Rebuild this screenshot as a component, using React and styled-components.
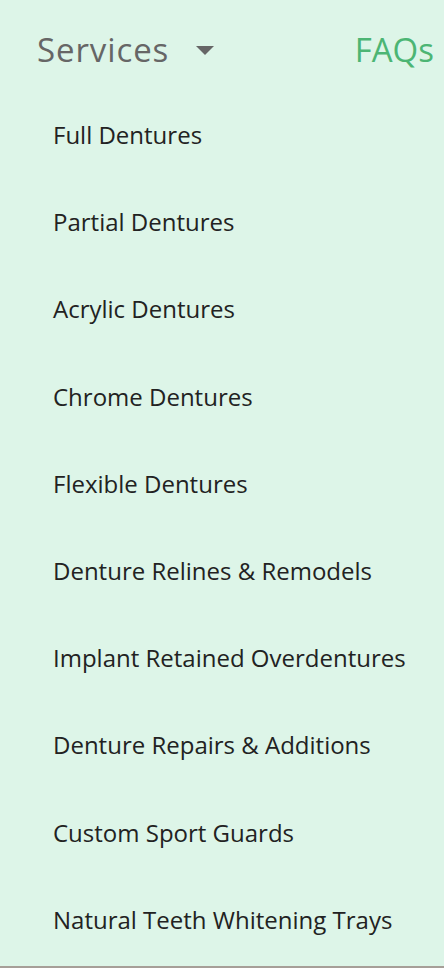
import React from "react";
import styled, { createGlobalStyle } from "styled-components";

const GlobalStyle = createGlobalStyle`
  html, body {
    margin: 0;
    padding: 0;
    background: #ddf5e8;
  }
  * { box-sizing: border-box; }
`;

const Menu = styled.nav`
  width: 444px;
  height: 968px;
  background: #ddf5e8;
  font-family: "Open Sans", "Liberation Sans", sans-serif;
  display: flex;
  flex-direction: column;
  border-bottom: 2px solid #a69f98;
  overflow: hidden;
`;

const TopBar = styled.div`
  display: flex;
  align-items: center;
  justify-content: space-between;
  height: 98px;
  padding: 0 10px 0 37px;
`;

const Toggle = styled.button`
  display: flex;
  align-items: center;
  gap: 27px;
  border: none;
  background: none;
  padding: 0;
  font: inherit;
  font-size: 33px;
  letter-spacing: 0.9px;
  color: #666666;
  cursor: pointer;
`;

const Caret = styled.span`
  width: 0;
  height: 0;
  border-left: 9.5px solid transparent;
  border-right: 9.5px solid transparent;
  border-top: 9px solid #666666;
  margin-top: 2px;
`;

const TopLink = styled.a`
  font-size: 33px;
  color: #4cb574;
  text-decoration: none;
`;

const List = styled.ul`
  list-style: none;
  margin: 0;
  padding: 0;
  display: flex;
  flex-direction: column;
`;

const Item = styled.li`
  height: 87.2px;
  display: flex;
  align-items: center;
  padding-left: 53px;
  font-size: 24px;
  color: #222222;
  margin-top: ${p => (p.$first ? "-7px" : "0")};
`;

const services = [
  "Full Dentures",
  "Partial Dentures",
  "Acrylic Dentures",
  "Chrome Dentures",
  "Flexible Dentures",
  "Denture Relines & Remodels",
  "Implant Retained Overdentures",
  "Denture Repairs & Additions",
  "Custom Sport Guards",
  "Natural Teeth Whitening Trays",
];

export default function App() {
  return (
    <>
      <GlobalStyle />
      <Menu>
        <TopBar>
          <Toggle>
            Services
            <Caret />
          </Toggle>
          <TopLink href="#">FAQs</TopLink>
        </TopBar>
        <List>
          {services.map((s, i) => (
            <Item key={s} $first={i === 0}>{s}</Item>
          ))}
        </List>
      </Menu>
    </>
  );
}
